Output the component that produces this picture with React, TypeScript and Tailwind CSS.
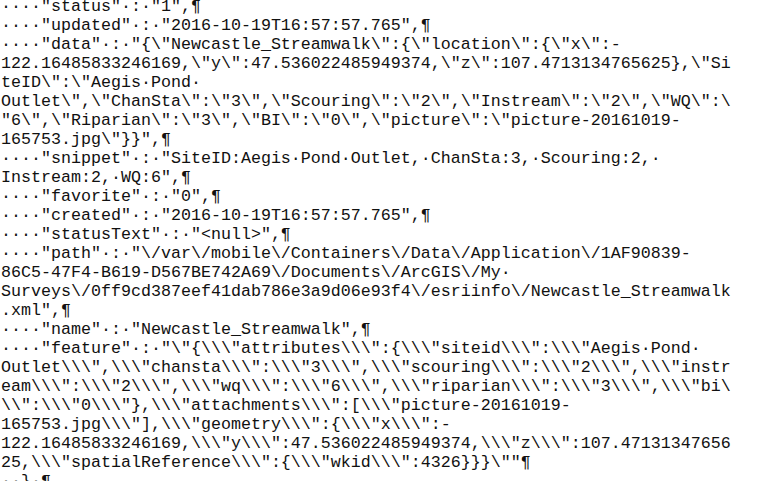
const B = '\\'

// '~' stands in for a backslash so the lines stay readable
const raw = [
  '····"status"·:·"1",¶',
  '····"updated"·:·"2016-10-19T16:57:57.765",¶',
  '····"data"·:·"{~"Newcastle_Streamwalk~":{~"location~":{~"x~":-',
  '122.16485833246169,~"y~":47.536022485949374,~"z~":107.4713134765625},~"Si',
  'teID~":~"Aegis·Pond·',
  'Outlet~",~"ChanSta~":~"3~",~"Scouring~":~"2~",~"Instream~":~"2~",~"WQ~":~',
  '"6~",~"Riparian~":~"3~",~"BI~":~"0~",~"picture~":~"picture-20161019-',
  '165753.jpg~"}}",¶',
  '····"snippet"·:·"SiteID:Aegis·Pond·Outlet,·ChanSta:3,·Scouring:2,·',
  'Instream:2,·WQ:6",¶',
  '····"favorite"·:·"0",¶',
  '····"created"·:·"2016-10-19T16:57:57.765",¶',
  '····"statusText"·:·"<null>",¶',
  '····"path"·:·"~/var~/mobile~/Containers~/Data~/Application~/1AF90839-',
  '86C5-47F4-B619-D567BE742A69~/Documents~/ArcGIS~/My·',
  'Surveys~/0ff9cd387eef41dab786e3a9d06e93f4~/esriinfo~/Newcastle_Streamwalk',
  '.xml",¶',
  '····"name"·:·"Newcastle_Streamwalk",¶',
  '····"feature"·:·"~"{~~~"attributes~~~":{~~~"siteid~~~":~~~"Aegis·Pond·',
  'Outlet~~~",~~~"chansta~~~":~~~"3~~~",~~~"scouring~~~":~~~"2~~~",~~~"instr',
  'eam~~~":~~~"2~~~",~~~"wq~~~":~~~"6~~~",~~~"riparian~~~":~~~"3~~~",~~~"bi~',
  '~~":~~~"0~~~"},~~~"attachments~~~":[~~~"picture-20161019-',
  '165753.jpg~~~"],~~~"geometry~~~":{~~~"x~~~":-',
  '122.16485833246169,~~~"y~~~":47.536022485949374,~~~"z~~~":107.47131347656',
  '25,~~~"spatialReference~~~":{~~~"wkid~~~":4326}}}~""¶',
  '··}·¶',
]

const lines = raw.map((l) => l.split('~').join(B))

export default function App() {
  return (
    <div className="w-[780px] h-[481px] overflow-hidden bg-white">
      <div className="-mt-[3px] pl-px font-['Liberation_Mono','Courier_New',monospace] text-[16.67px] leading-[19px] text-[#111]">
        {lines.map((line, i) => (
          <div key={i} className="whitespace-pre">
            {line}
          </div>
        ))}
      </div>
    </div>
  )
}
